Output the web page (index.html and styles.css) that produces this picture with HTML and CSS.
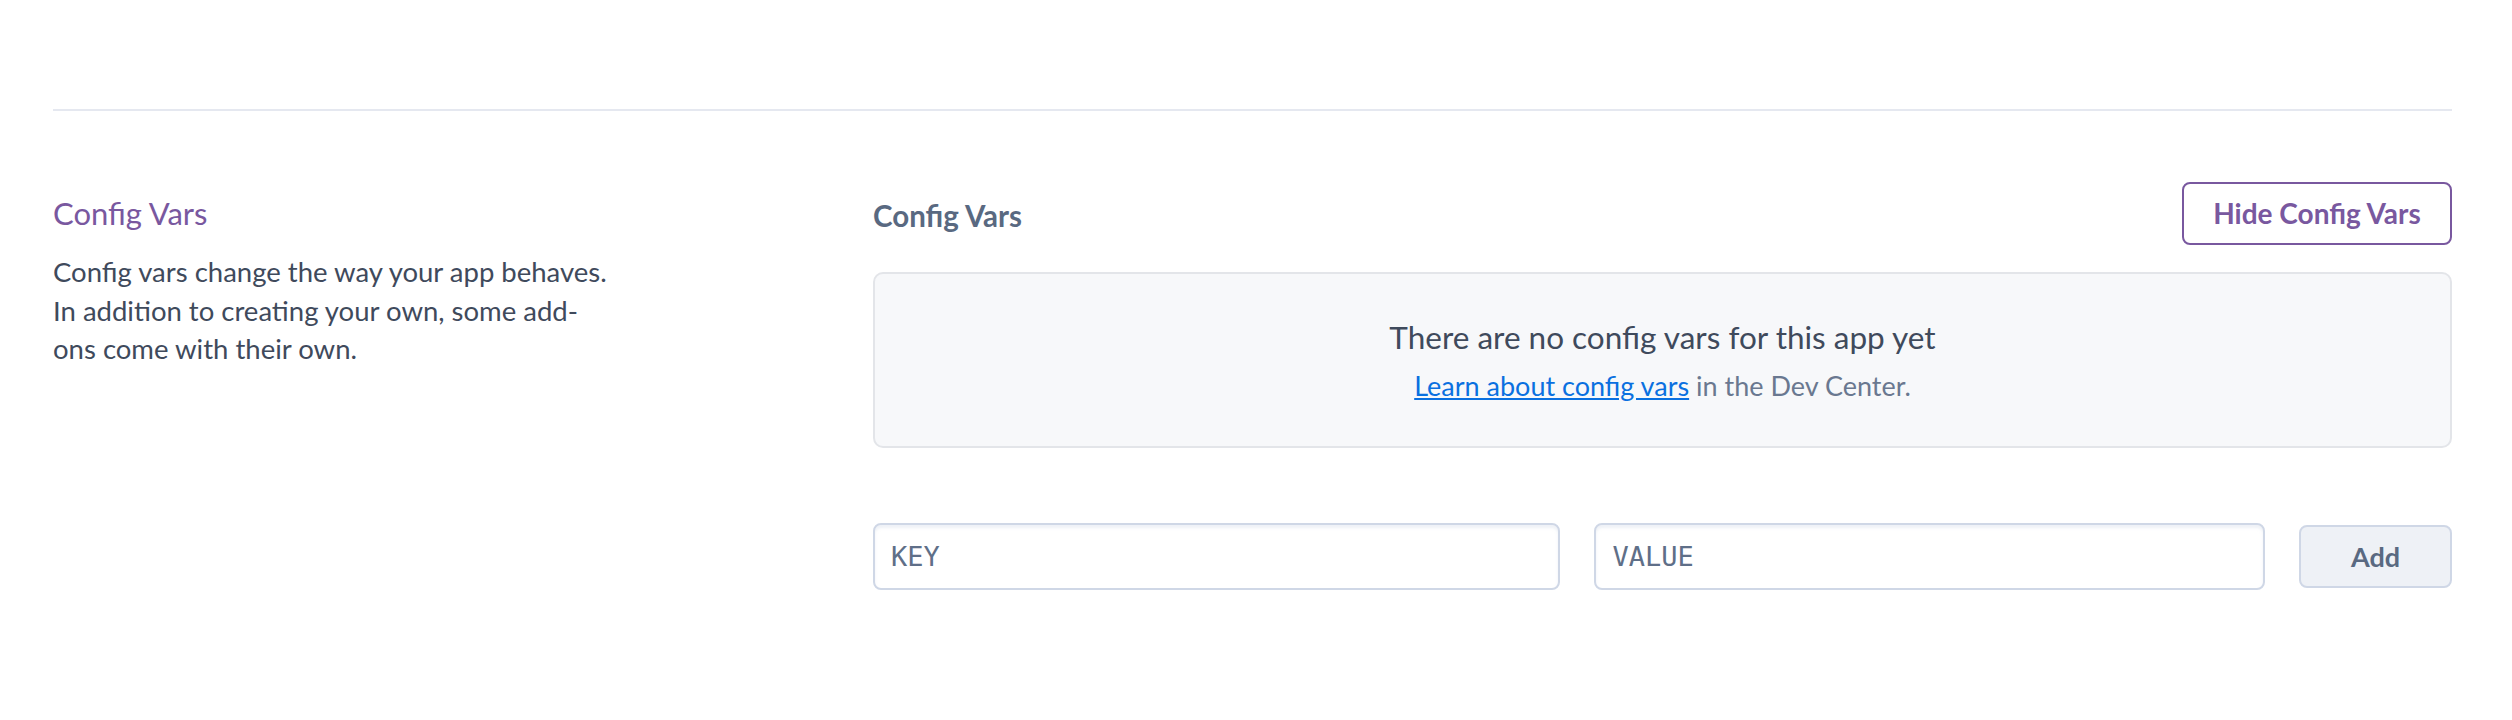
FILE: index.html
```html
<!DOCTYPE html>
<html lang="en">
<head>
<meta charset="utf-8">
<title>Config Vars</title>
<link rel="stylesheet" href="styles.css">
</head>
<body>
<div class="page">
  <div class="divider"></div>
  <section class="settings-section">
    <div class="section-info">
      <h2 class="section-title">Config Vars</h2>
      <p class="section-desc">Config vars change the way your app behaves.<br>In addition to creating your own, some add-<br>ons come with their own.</p>
    </div>
    <div class="section-body">
      <div class="body-header">
        <h3 class="body-title">Config Vars</h3>
        <button class="btn-outline">Hide Config Vars</button>
      </div>
      <div class="empty-box">
        <div class="empty-title">There are no config vars for this app yet</div>
        <div class="empty-sub"><a href="#" class="link">Learn about config vars</a> in the Dev Center.</div>
      </div>
      <div class="add-row">
        <input class="field" type="text" placeholder="KEY">
        <input class="field" type="text" placeholder="VALUE">
        <button class="btn-add">Add</button>
      </div>
    </div>
  </section>
</div>
</body>
</html>
```
FILE: styles.css
```css
* { box-sizing: border-box; }
html, body { margin: 0; padding: 0; background: #fff; }
body { font-family: Lato, "Noto Sans", sans-serif; color: #3f4a5c; }
.page { padding: 109px 60px 0 53px; }
.divider { height: 2px; background: #e5e8f0; }
.settings-section {
  display: grid;
  grid-template-columns: 820px 1fr;
  padding-top: 71px;
}
.section-title {
  margin: 12px 0 0 0;
  font-size: 31px;
  font-weight: 400;
  line-height: 38px;
  color: #79589f;
}
.section-desc {
  margin: 21px 0 0 0;
  font-size: 27.5px;
  line-height: 38.5px;
  color: #3f4a5c;
}
.body-header {
  display: flex;
  align-items: center;
  justify-content: space-between;
  height: 62px;
}
.body-title {
  margin: 5px 0 0 0;
  font-size: 29.5px;
  font-weight: 700;
  color: #596981;
}
.btn-outline {
  height: 63px;
  width: 270px;
  border: 2px solid #79589f;
  border-radius: 8px;
  background: #fff;
  color: #79589f;
  font-family: Lato, "Noto Sans", sans-serif;
  font-size: 28px;
  font-weight: 700;
}
.empty-box {
  margin-top: 28px;
  height: 176px;
  border: 2px solid #e3e5e9;
  border-radius: 10px;
  background: #f7f8fa;
  text-align: center;
  padding-top: 43px;
}
.empty-title {
  font-size: 31.5px;
  line-height: 40px;
  color: #3f4a5c;
}
.empty-sub {
  margin-top: 11px;
  font-size: 27px;
  line-height: 36px;
  color: #6a7890;
}
.link { color: #0a70e0; text-decoration: underline; }
.add-row {
  display: grid;
  grid-template-columns: 688fr 671fr 153px;
  column-gap: 34px;
  align-items: center;
  margin-top: 75px;
}
.field {
  height: 67px;
  border: 2px solid #cfd7e6;
  border-radius: 8px;
  box-shadow: inset 0 3px 3px rgba(207, 215, 230, 0.35);
  padding: 0 16px;
  font-family: "DejaVu Sans Mono", monospace;
  font-size: 27px;
  color: #596981;
  background: #fff;
}
.field::placeholder { color: #5f6f88; }
.btn-add {
  height: 63px;
  border: 2px solid #cfd7e6;
  border-radius: 8px;
  background: #eef1f6;
  color: #596981;
  font-family: Lato, "Noto Sans", sans-serif;
  font-size: 27px;
  font-weight: 700;
}
```
